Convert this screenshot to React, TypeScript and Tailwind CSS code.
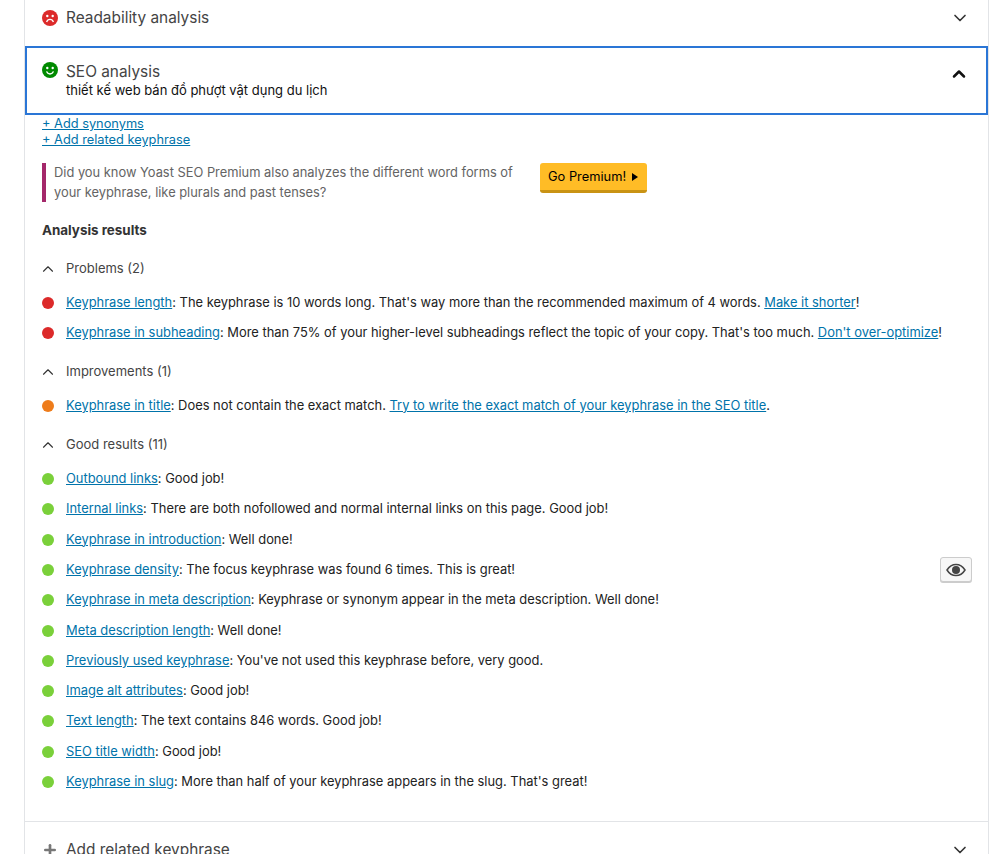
import { ChevronDown, ChevronUp, Plus } from 'lucide-react'
import type { ReactNode } from 'react'

const FONT = 'font-["Inter","Liberation_Sans",sans-serif]'

type Result = {
  link: string
  text: string
  cta?: string
  after?: string
}

const problems: Result[] = [
  {
    link: 'Keyphrase length',
    text: ": The keyphrase is 10 words long. That's way more than the recommended maximum of 4 words. ",
    cta: 'Make it shorter',
    after: '!',
  },
  {
    link: 'Keyphrase in subheading',
    text: ": More than 75% of your higher-level subheadings reflect the topic of your copy. That's too much. ",
    cta: "Don't over-optimize",
    after: '!',
  },
]

const improvements: Result[] = [
  {
    link: 'Keyphrase in title',
    text: ': Does not contain the exact match. ',
    cta: 'Try to write the exact match of your keyphrase in the SEO title',
    after: '.',
  },
]

const good: Result[] = [
  { link: 'Outbound links', text: ': Good job!' },
  { link: 'Internal links', text: ': There are both nofollowed and normal internal links on this page. Good job!' },
  { link: 'Keyphrase in introduction', text: ': Well done!' },
  { link: 'Keyphrase density', text: ': The focus keyphrase was found 6 times. This is great!' },
  { link: 'Keyphrase in meta description', text: ': Keyphrase or synonym appear in the meta description. Well done!' },
  { link: 'Meta description length', text: ': Well done!' },
  { link: 'Previously used keyphrase', text: ": You've not used this keyphrase before, very good." },
  { link: 'Image alt attributes', text: ': Good job!' },
  { link: 'Text length', text: ': The text contains 846 words. Good job!' },
  { link: 'SEO title width', text: ': Good job!' },
  { link: 'Keyphrase in slug', text: ": More than half of your keyphrase appears in the slug. That's great!" },
]

function Face({ color, sad }: { color: string; sad?: boolean }) {
  return (
    <svg width="16" height="16" viewBox="0 0 16 16" className="shrink-0">
      <circle cx="8" cy="8" r="8" fill={color} />
      <circle cx="5.3" cy="6" r="1.2" fill="#fff" />
      <circle cx="10.7" cy="6" r="1.2" fill="#fff" />
      <path
        d={sad ? 'M4.6 12c.6-1.8 1.900-2.600 3.400-2.600s2.800.8 3.400 2.600' : 'M4.600 9.400c.6 1.800 1.900 2.600 3.400 2.600s2.800-.8 3.400-2.600'}
        fill="none"
        stroke="#fff"
        strokeWidth="1.3"
      />
    </svg>
  )
}

function ResultRow({ item, color, children }: { item: Result; color: string; children?: ReactNode }) {
  return (
    <li className="flex items-center h-[30.3px]">
      <span className={`w-[12px] h-[12px] rounded-full shrink-0 ${color}`} />
      <p className="ml-[12px] text-[12.9px] leading-5 text-[#222] whitespace-nowrap">
        <a className="text-[#0073aa] underline">{item.link}</a>
        {item.text}
        {item.cta && <a className="text-[#0073aa] underline">{item.cta}</a>}
        {item.after}
      </p>
      {children}
    </li>
  )
}

function GroupHeading({ label }: { label: string }) {
  return (
    <div className="flex items-center h-[20px] text-[13px] text-[#444]">
      <ChevronUp size={18} strokeWidth={1.5} className="text-[#333] -ml-[3px] shrink-0" />
      <span className="ml-[9px]">{label}</span>
    </div>
  )
}

export default function App() {
  return (
    <div className={`${FONT} w-[1000px] h-[854px] overflow-hidden bg-white`}>
      <div className="ml-6 w-[965px] h-full border-x border-[#e2e4e7]">
        <div className="flex items-center h-[46px] pl-[17px] pr-[18px] pb-[11px]">
          <Face color="#dc2a2a" sad />
          <span className="ml-2 text-[15.4px] text-[#444]">Readability analysis</span>
          <ChevronDown size={20} strokeWidth={2} className="ml-auto text-[#333]" />
        </div>

        <div className="flex h-[69px] border-2 border-[#2a76d6] pl-[15px] pr-[17px]">
          <div className="pt-[14px]">
            <Face color="#008a00" />
          </div>
          <div className="ml-2 pt-[13px]">
            <div className="text-[15.4px] leading-[21px] text-[#444]">SEO analysis</div>
            <div className="text-[13px] leading-[17px] text-[#111]">thiết kế web bán đồ phượt vật dụng du lịch</div>
          </div>
          <ChevronUp size={20} strokeWidth={3} className="ml-auto mt-[16px] text-[#111]" />
        </div>

        <div className="pl-[17px]">
          <div className="pt-px text-[12.8px] leading-[16px] text-[#0073aa] underline">+ Add synonyms</div>
          <div className="text-[12.8px] leading-[16px] text-[#0073aa] underline">+ Add related keyphrase</div>

          <div className="flex items-start mt-[15px]">
            <div className="w-1 h-[39px] bg-[#a4286a]" />
            <p className="ml-2 w-[480px] text-[12.87px] leading-[19.5px] text-[#646464]">
              Did you know Yoast SEO Premium also analyzes the different word forms of your keyphrase, like plurals and
              past tenses?
            </p>
            <button className="flex items-center ml-[6px] h-[30px] w-[107px] pl-2 rounded-[3px] bg-[#ffbc26] border-b-[3px] border-[#c99314] text-[12.85px] text-black whitespace-nowrap">
              Go Premium!
              <span className="ml-[6px] w-0 h-0 border-y-[4px] border-y-transparent border-l-[6px] border-l-black" />
            </button>
          </div>

          <h3 className="mt-[18px] text-[13.4px] leading-5 font-bold text-[#333]">Analysis results</h3>

          <div className="mt-[19px]">
            <GroupHeading label="Problems (2)" />
            <ul className="mt-[9px]">
              {problems.map((p) => (
                <ResultRow key={p.link} item={p} color="bg-[#dc2a2a]" />
              ))}
            </ul>
          </div>

          <div className="mt-[13px]">
            <GroupHeading label="Improvements (1)" />
            <ul className="mt-[9px]">
              {improvements.map((p) => (
                <ResultRow key={p.link} item={p} color="bg-[#ee7c1b]" />
              ))}
            </ul>
          </div>

          <div className="mt-[14px]">
            <GroupHeading label="Good results (11)" />
            <ul className="mt-[9px]">
              {good.map((p) => (
                <ResultRow key={p.link} item={p} color="bg-[#7ad03a]">
                  {p.link === 'Keyphrase density' && (
                    <button className="ml-auto mr-4 flex items-center justify-center w-[32px] h-[25px] rounded-[3px] border border-[#ccc] bg-[#f7f7f7] shadow-[0_1px_0_#ccc]">
                      <svg width="20" height="14" viewBox="0 0 20 14">
                        <path d="M1 7c2.200-3.600 5.300-5.600 9-5.600s6.800 2 9 5.600c-2.200 3.600-5.300 5.600-9 5.600S3.200 10.600 1 7z" fill="none" stroke="#444" strokeWidth="1.5" />
                        <circle cx="10" cy="7" r="4" fill="#444" />
                      </svg>
                    </button>
                  )}
                </ResultRow>
              ))}
            </ul>
          </div>
        </div>

        <div className="mt-[24px] border-t border-[#e2e4e7] flex items-center h-[56px] pl-[17px] pr-[18px] text-[#777]">
          <Plus size={16} strokeWidth={4} className="shrink-0" />
          <span className="ml-2 text-[15.4px] text-[#444]">Add related keyphrase</span>
          <ChevronDown size={20} strokeWidth={2} className="ml-auto text-[#333]" />
        </div>
      </div>
    </div>
  )
}
